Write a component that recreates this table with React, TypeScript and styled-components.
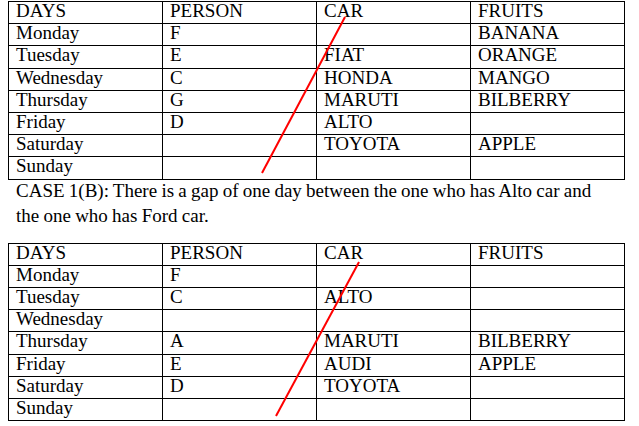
import styled, { createGlobalStyle } from 'styled-components';

const GlobalStyle = createGlobalStyle`
  body {
    margin: 0;
    background: #fff;
    color: #000;
    font-family: "Liberation Serif", "Times New Roman", serif;
  }
`;

const Page = styled.div`
  width: 617px;
  padding: 1px 0 0 8px;
`;

const TableWrap = styled.div`
  position: relative;
`;

const Table = styled.table`
  width: 617px;
  border-collapse: collapse;
  table-layout: fixed;
  font-family: "Liberation Serif", "Times New Roman", serif;
`;

const Cell = styled.td`
  border: 1px solid #000;
  padding: 0 4px 3px 7px;
  height: 18.2px;
  line-height: 18.2px;
  font-size: 19px;
  white-space: nowrap;
  vertical-align: top;
`;

const Strike = styled.svg`
  position: absolute;
  left: 0;
  top: 0;
  width: 617px;
  height: 180px;
  pointer-events: none;
`;

const Note = styled.p`
  margin: -2px 0 15px 8px;
  font-size: 19px;
  line-height: 25px;
  word-spacing: -0.5px;
`;

type Row = [string, string, string, string];

const head: Row = ['DAYS', 'PERSON', 'CAR', 'FRUITS'];

const caseA: Row[] = [
  ['Monday', 'F', '', 'BANANA'],
  ['Tuesday', 'E', 'FIAT', 'ORANGE'],
  ['Wednesday', 'C', 'HONDA', 'MANGO'],
  ['Thursday', 'G', 'MARUTI', 'BILBERRY'],
  ['Friday', 'D', 'ALTO', ''],
  ['Saturday', '', 'TOYOTA', 'APPLE'],
  ['Sunday', '', '', ''],
];

const caseB: Row[] = [
  ['Monday', 'F', '', ''],
  ['Tuesday', 'C', 'ALTO', ''],
  ['Wednesday', '', '', ''],
  ['Thursday', 'A', 'MARUTI', 'BILBERRY'],
  ['Friday', 'E', 'AUDI', 'APPLE'],
  ['Saturday', 'D', 'TOYOTA', ''],
  ['Sunday', '', '', ''],
];

interface IDayTableProps {
  rows: Row[];
  cross: [number, number, number, number];
}

function DayTable({ rows, cross }: IDayTableProps): JSX.Element {
  const [x1, y1, x2, y2] = cross;
  return (
    <TableWrap>
      <Table>
        <tbody>
          {[head, ...rows].map((row, i) => (
            <tr key={i}>
              {row.map((text, j) => (
                <Cell key={j}>{text}</Cell>
              ))}
            </tr>
          ))}
        </tbody>
      </Table>
      <Strike viewBox="0 0 617 180">
        <line x1={x1} y1={y1} x2={x2} y2={y2} stroke="#ff0000" strokeWidth="2" />
      </Strike>
    </TableWrap>
  );
}

export default function App(): JSX.Element {
  return (
    <Page>
      <GlobalStyle />
      <DayTable rows={caseA} cross={[337, 16, 254, 172]} />
      <Note>
        CASE 1(B): There is a gap of one day between the one who has Alto car and
        <br />
        the one who has Ford car.
      </Note>
      <DayTable rows={caseB} cross={[351, 19, 268, 173]} />
    </Page>
  );
}
